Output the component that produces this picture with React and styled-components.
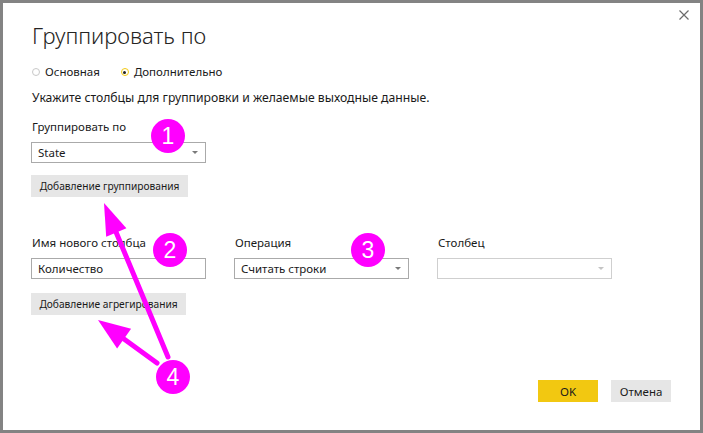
import styled, { createGlobalStyle } from "styled-components";

const GlobalStyle = createGlobalStyle`
  html, body {
    margin: 0;
    padding: 0;
    background: #fff;
  }
  body {
    font-family: "Noto Sans", "Open Sans", sans-serif;
    color: #1a1a1a;
  }
`;

const Frame = styled.div`
  position: relative;
  width: 703px;
  height: 433px;
  box-sizing: border-box;
  border: 3px solid #838383;
  background: #fff;
  display: flex;
  flex-direction: column;
`;

const CloseRow = styled.div`
  display: flex;
  justify-content: flex-end;
  padding: 7px 11px 0 0;
  height: 10px;
`;

const Body = styled.div`
  flex: 1;
  display: flex;
  flex-direction: column;
  padding: 0 29px 28px 28px;
`;

const Title = styled.h1`
  margin: 0 0 0 1px;
  font-size: 22px;
  line-height: 30px;
  font-weight: 300;
  color: #252423;
`;

const RadioRow = styled.div`
  display: flex;
  gap: 21px;
  margin: 14px 0 0 1px;
  font-size: 11.5px;
  line-height: 16px;
`;

const RadioItem = styled.label`
  display: flex;
  align-items: center;
  gap: 5px;
`;

const RadioDot = styled.span`
  width: 8px;
  height: 8px;
  box-sizing: border-box;
  border-radius: 50%;
  border: 1px solid ${(p) => (p.$checked ? "#f2c811" : "#c8c8c8")};
  display: flex;
  align-items: center;
  justify-content: center;

  &::after {
    content: "";
    width: 3px;
    height: 3px;
    border-radius: 50%;
    background: ${(p) => (p.$checked ? "#222" : "transparent")};
  }
`;

const Hint = styled.p`
  margin: 9px 0 0 1px;
  font-size: 12.2px;
  line-height: 17px;
`;

const Label = styled.div`
  font-size: 11.5px;
  line-height: 16px;
  margin-left: 1px;
  margin-bottom: 7px;
`;

const Section = styled.div`
  margin-top: ${(p) => p.$top}px;
`;

const Field = styled.div`
  width: 175px;
  height: 21px;
  box-sizing: border-box;
  border: 1px solid ${(p) => (p.$disabled ? "#cfcfcf" : "#aaaaaa")};
  background: #fff;
  display: flex;
  align-items: center;
  justify-content: space-between;
  padding: 0 7px 0 6px;
  font-size: 11.5px;
  color: #1a1a1a;
`;

const Caret = styled.span`
  width: 0;
  height: 0;
  border-left: 3px solid transparent;
  border-right: 3px solid transparent;
  border-top: 3px solid ${(p) => (p.$disabled ? "#c4c4c4" : "#7a7a7a")};
`;

const GreyButton = styled.button`
  display: block;
  height: 22px;
  width: ${(p) => p.$w}px;
  border: none;
  background: #e6e6e6;
  font-family: inherit;
  font-size: 10.2px;
  color: #1a1a1a;
  padding: 0;
  margin-top: ${(p) => p.$top || 0}px;
`;

const Columns = styled.div`
  display: grid;
  grid-template-columns: 175px 175px 175px;
  column-gap: 28px;
`;

const Footer = styled.div`
  margin-top: auto;
  display: flex;
  justify-content: flex-end;
  gap: 13px;
`;

const FooterButton = styled.button`
  width: 60px;
  height: 22px;
  border: none;
  padding: 0;
  font-family: inherit;
  font-size: 11.5px;
  color: #1a1a1a;
  background: ${(p) => (p.$primary ? "#f2c811" : "#e6e6e6")};
`;

const Overlay = styled.svg`
  position: absolute;
  left: -3px;
  top: -3px;
  pointer-events: none;
`;

const Badge = ({ x, y, n }) => (
  <g>
    <circle cx={x} cy={y} r="17" fill="#ff00ff" />
    <text
      x={x}
      y={y + 8}
      textAnchor="middle"
      fill="#fff"
      fontFamily="Liberation Sans, Arial, sans-serif"
      fontSize="23"
    >
      {n}
    </text>
  </g>
);

function Annotations() {
  return (
    <Overlay width="703" height="433" viewBox="0 0 703 433">
      <g stroke="#ff00ff" strokeWidth="5" strokeLinecap="round">
        <line x1="168" y1="357" x2="116" y2="232" />
        <line x1="157" y1="363" x2="124" y2="339" />
      </g>
      <g fill="#ff00ff">
        <polygon points="104,203 126.4,228.3 106.2,236.7" />
        <polygon points="98,320 131.1,328.8 117.1,348.4" />
      </g>
      <Badge x={168} y={136} n="1" />
      <Badge x={170} y={250} n="2" />
      <Badge x={368} y={250} n="3" />
      <Badge x={173} y={377} n="4" />
    </Overlay>
  );
}

function CloseIcon() {
  return (
    <svg width="10" height="10" viewBox="0 0 10 10">
      <path d="M0.5 0.5 L9.5 9.5 M9.5 0.5 L0.5 9.5" stroke="#6b6b6b" strokeWidth="1.2" />
    </svg>
  );
}

export default function App() {
  return (
    <>
      <GlobalStyle />
      <Frame>
        <CloseRow>
          <CloseIcon />
        </CloseRow>
        <Body>
          <Title>Группировать по</Title>
          <RadioRow>
            <RadioItem>
              <RadioDot />
              Основная
            </RadioItem>
            <RadioItem>
              <RadioDot $checked />
              Дополнительно
            </RadioItem>
          </RadioRow>
          <Hint>Укажите столбцы для группировки и желаемые выходные данные.</Hint>

          <Section $top={13}>
            <Label>Группировать по</Label>
            <Field>
              State
              <Caret />
            </Field>
            <GreyButton $w={157} $top={12}>
              Добавление группирования
            </GreyButton>
          </Section>

          <Section $top={38}>
            <Columns>
              <div>
                <Label>Имя нового столбца</Label>
                <Field>Количество</Field>
              </div>
              <div>
                <Label>Операция</Label>
                <Field>
                  Считать строки
                  <Caret />
                </Field>
              </div>
              <div>
                <Label>Столбец</Label>
                <Field $disabled>
                  <span />
                  <Caret $disabled />
                </Field>
              </div>
            </Columns>
            <GreyButton $w={155} $top={14}>
              Добавление агрегирования
            </GreyButton>
          </Section>

          <Footer>
            <FooterButton $primary>OK</FooterButton>
            <FooterButton>Отмена</FooterButton>
          </Footer>
        </Body>
        <Annotations />
      </Frame>
    </>
  );
}
